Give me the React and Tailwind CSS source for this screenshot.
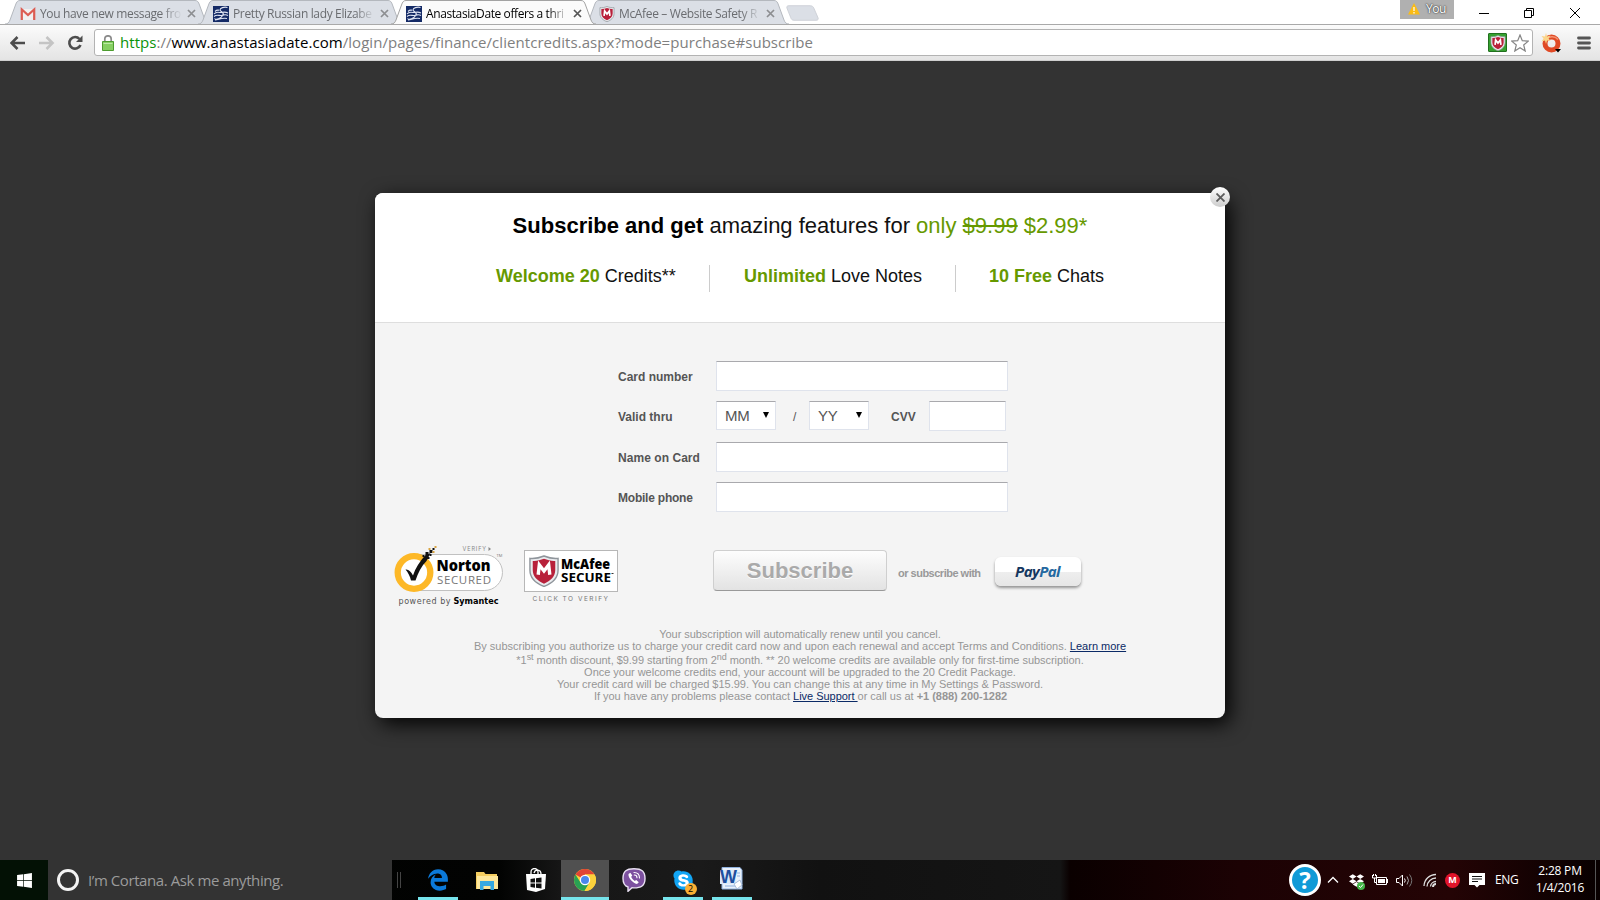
import React from 'react';
import { FaWindows, FaEdgeLegacy, FaSkype, FaDropbox } from 'react-icons/fa';

const TABS = [
  { icon: 'gmail', title: 'You have new message fro', spacing: 'tracking-[-0.35px]' },
  { icon: 'anastasia', title: 'Pretty Russian lady Elizabe', spacing: 'tracking-[-0.35px]' },
  { icon: 'anastasia', title: 'AnastasiaDate offers a thri', active: true, spacing: 'tracking-[-0.4px]' },
  { icon: 'mcafee', title: 'McAfee – Website Safety R', spacing: 'tracking-[-0.35px]' },
];

const McAfeeShield = ({ className }) => (
  <svg className={className} viewBox="0 0 32 34">
    <path d="M16 1C11 3 6 4 1 3.500V16C1 25 8 30.500 16 33.500C24 30.500 31 25 31 16V3.500C26 4 21 3 16 1Z" fill="#e9ebee" stroke="#8f959b" strokeWidth="1.500" />
    <path d="M16 4C12 5.500 8 6.500 4 6.200V16C4 23 9 27.500 16 30.500C23 27.500 28 23 28 16V6.200C24 6.500 20 5.500 16 4Z" fill="#b8203a" />
    <path d="M9.800 21L11 10.500L16 17L21 10.500L22.200 21" fill="none" stroke="#fff" strokeWidth="3.600" />
  </svg>
);

const Favicon = ({ name }) => {
  if (name === 'gmail') {
    return (
      <svg className="h-4 w-4 shrink-0" viewBox="0 0 16 16">
        <path d="M1 3H15V14H1Z" fill="#f1efef" />
        <path d="M1.800 14V3.500L8 9L14.200 3.500V14" fill="none" stroke="#dc5c52" strokeWidth="2.200" />
      </svg>
    );
  }
  if (name === 'mcafee') return <McAfeeShield className="h-4 w-4 shrink-0" />;
  return (
    <svg className="h-4 w-4 shrink-0" viewBox="0 0 16 16">
      <path d="M0 0H16V16H0Z" fill="#142a66" />
      <path d="M14.500 1.500C11 0.500 7 2 7 4C7.500 6 11.500 6 10 9C8 12.500 3 14.500 1.500 12.500M1 8C3 5.500 5 6 7 6.500S11 5 15 7M1 10.500C4 8 6 10 8.500 9.500S12 8 15 9.500M2 14C6 13.500 9 11.500 14 12.500M2 5.500C4 3.500 5 4.500 6 4" fill="none" stroke="#dfe4f2" strokeWidth="1.100" />
    </svg>
  );
};

const CloseMark = ({ color }) => (
  <svg className="h-[9px] w-[9px] shrink-0" viewBox="0 0 9 9">
    <path d="M1 1L8 8M8 1L1 8" stroke={color} strokeWidth="1.700" />
  </svg>
);

const Tab = ({ tab }) => (
  <div className={`relative -mr-[15px] h-6 w-[208px] shrink-0 ${tab.active ? 'z-10' : ''}`}>
    <svg className="absolute inset-0 h-full w-full" viewBox="0 0 208 24">
      <path
        d="M0 24C3 24 4 22.500 5 20L10.500 5C11.500 2 12.500 0.500 15 0.500H190C192.500 0.500 193.500 2 194.500 5L200 20C201 22.500 202 24 205 24"
        fill={tab.active ? '#fbfbfb' : '#dbdfe6'}
        stroke={tab.active ? '#a3a3a3' : '#b4b8be'}
      />
    </svg>
    <div className="relative flex h-full items-center pl-[15px] pt-[3px]">
      <Favicon name={tab.icon} />
      <div className={`ml-1 w-[142px] overflow-hidden whitespace-nowrap text-[12px] [mask-image:linear-gradient(to_right,black_86%,transparent)] ${tab.spacing} ${tab.active ? 'text-black' : 'text-[#6a6c70]'}`}>
        {tab.title}
      </div>
      <div className="ml-[5px] flex">
        <CloseMark color={tab.active ? '#555' : '#8c8e91'} />
      </div>
    </div>
  </div>
);

const BrowserChrome = () => (
  <header className="shrink-0 font-['Open_Sans',sans-serif]">
    <div className="flex h-6 justify-between bg-white">
      <div className="flex pl-[5px]">
        {TABS.map((tab) => (
          <Tab key={tab.title} tab={tab} />
        ))}
        <svg className="ml-[9px] mt-[5px] h-4 w-[33px]" viewBox="0 0 34 16">
          <path d="M3 0.500H25C27 0.500 28 1.500 28.700 3L33 13C33.500 14.500 33 15.500 31 15.500H8C6.500 15.500 5.500 14.500 5 13L1 3C0.500 1.500 1 0.500 3 0.500Z" fill="#dbdfe6" stroke="#cdd1d7" />
        </svg>
      </div>
      <div className="flex">
        <div className="flex h-[19px] w-[54px] items-center bg-[#b0b0b0] pb-0.5 pl-2 text-[12px] tracking-[-0.5px] text-white">
          <svg className="mr-[6px] h-3 w-3" viewBox="0 0 12 12">
            <path d="M6 0L12 11.500H0Z" fill="#fbbc14" />
            <path d="M6 4V8M6 9V10.500" stroke="#fff" strokeWidth="1.200" />
          </svg>
          <span className="[text-shadow:0_0_2px_#222,0_0_1px_#444]">You</span>
        </div>
        <svg className="ml-[25px] h-6 w-[121px]" viewBox="0 0 121 24" fill="none" stroke="#000">
          <path d="M0 13.500H10M45.500 10.500H52.500V17.500H45.500ZM47.500 10V8.500H54.500V15.500H53M91 8L101 18M101 8L91 18" />
        </svg>
      </div>
    </div>
    <div className="flex h-[37px] items-center border-b border-t border-b-[#d0d0d0] border-t-[#a9a9a9] bg-gradient-to-b from-[#fbfbfb] to-[#e4e4e4] pl-2.5">
      <svg className="h-5 w-[75px]" viewBox="0 0 75 20" fill="none" strokeWidth="2.600">
        <path d="M15 10H1.500M7.500 4L1.500 10L7.500 16" stroke="#4d4d4d" />
        <path d="M29 10H42.500M36.500 4L42.500 10L36.500 16" stroke="#c4c4c4" />
        <path d="M70.500 12A5.800 5.800 0 1 1 69.500 6" stroke="#4d4d4d" />
        <path d="M72.500 2.500V9H66Z" fill="#4d4d4d" />
      </svg>
      <div className="ml-[9px] flex h-[27px] w-[1439px] items-center rounded-[3px] border border-[#b3b3b3] bg-white pl-[7px] pr-[3px]">
        <svg className="h-4 w-3" viewBox="0 0 12 16">
          <path d="M2.800 8V4A3.200 3.200 0 0 1 9.200 4V8" fill="none" stroke="#8b8b8b" strokeWidth="1.700" />
          <path d="M0.500 6.500H11.500V15.500H0.500Z" fill="#86cf62" stroke="#4d9c2f" />
          <path d="M1.500 8.500H10.500" stroke="#bdeaa6" />
        </svg>
        <div className="ml-[6px] grow whitespace-nowrap text-[15px] tracking-[0.05px] text-[#808080]">
          <span className="text-[#0a930a]">https</span>://<span className="text-black">www.anastasiadate.com</span>
          /login/pages/finance/clientcredits.aspx?mode=purchase#subscribe
        </div>
        <div className="flex h-[19px] w-[19px] items-center justify-center rounded-[1px] border border-[#22701f] bg-[#35a12f]">
          <McAfeeShield className="h-4 w-4" />
        </div>
        <svg className="ml-1 h-[18px] w-[18px]" viewBox="0 0 18 18">
          <path d="M9 1L11.300 6.700L17.300 7.100L12.700 11L14.200 17L9 13.700L3.800 17L5.300 11L0.700 7.100L6.700 6.700Z" fill="#fff" stroke="#858585" strokeWidth="1.200" />
        </svg>
      </div>
      <svg className="ml-2 h-5 w-5" viewBox="0 0 20 20">
        <circle cx="10.500" cy="10.500" r="6.500" fill="none" stroke="#e04a26" strokeWidth="5" />
        <path d="M5 7A7.500 7.500 0 0 1 17 6.500" fill="none" stroke="#f49372" strokeWidth="1.500" />
        <path d="M5 0L6 3.500L9.500 2.500L7.500 5.500L9.500 8L6 7.500L5 11L4 7.500L0.500 8.500L2.500 5.500L0.500 3L4 3.500Z" fill="#fbd58a" />
        <path d="M14 16H20L17 19.500Z" fill="#000" />
      </svg>
      <svg className="ml-4 h-[14px] w-[14px]" viewBox="0 0 14 14">
        <path d="M1.500 2H12.500M1.500 7H12.500M1.500 12H12.500" stroke="#555" strokeWidth="2.800" strokeLinecap="round" />
      </svg>
    </div>
  </header>
);

const Field = ({ label, spacing = '', children }) => (
  <div className="flex items-start">
    <label className={`w-[98px] pt-2 text-[12px] font-bold leading-4 text-[#555] ${spacing}`}>{label}</label>
    {children}
  </div>
);

const inputClass = 'border border-[#dfe3ec] border-t-[#a9a9ad] bg-white outline-none';

const Select = ({ value }) => (
  <div className={`${inputClass} flex h-[29px] w-[60px] items-center justify-between pl-2 pr-1.5 text-[15px] text-[#555]`}>
    <span className="pt-px tracking-[-0.3px]">{value}</span>
    <svg className="mb-0.5 h-[6px] w-[6px]" viewBox="0 0 6 6">
      <path d="M0 0H6L3 6Z" fill="#000" />
    </svg>
  </div>
);

const NortonSeal = () => (
  <svg className="h-[64px] w-[111px]" viewBox="0.5 0 111 64">
    <text x="69" y="6" fontFamily="Inter" fontSize="5.500" letterSpacing="0.9" fill="#888">VERIFY</text>
    <path d="M95 2L97.500 4L95 6Z" fill="#888" />
    <path d="M20 9.500H91A17.500 17.500 0 0 1 91 45.500H20Z" fill="#fff" stroke="#c1c1c1" />
    <circle cx="20.500" cy="27.500" r="16.300" fill="#fff" stroke="#fdb827" strokeWidth="6.300" />
    <path d="M12 24.500C15 24 17.500 26.500 19.500 30.500C22 23 26 17 32 10L37 8L33 16C28 21 24.500 28 22 35.500H17.500C16.500 31 14.500 27.500 12 24.500Z" fill="#111" />
    <path d="M32 7H35V10H32ZM36 5H39V8H36ZM36 9H38V11H36ZM33 12H36V14H33ZM39 3H41V5H39ZM29 10H31V12H29Z" fill="#111" />
    <path d="M35 3H37V5H35ZM41 1H43V3H41ZM39 6H41V8H39Z" fill="#d9a441" />
    <text x="43" y="26" fontFamily="Open Sans" fontWeight="800" fontSize="15.500" textLength="54" lengthAdjust="spacingAndGlyphs" fill="#000">Norton</text>
    <text x="43.500" y="38.500" fontFamily="Open Sans" fontSize="11.500" textLength="54" fill="#777">SECURED</text>
    <text x="103" y="12" fontFamily="Open Sans" fontSize="4" fill="#777">TM</text>
    <text x="5" y="59" fontFamily="DejaVu Sans" fontSize="8" textLength="52" fill="#555">powered by</text>
    <text x="60" y="59" fontFamily="DejaVu Sans" fontWeight="700" fontSize="8" textLength="45" lengthAdjust="spacingAndGlyphs" fill="#000">Symantec</text>
  </svg>
);

const McAfeeSeal = () => (
  <div className="flex w-[94px] flex-col">
    <div className="flex h-[42px] items-center border border-[#b7b7b7] bg-white pl-1">
      <McAfeeShield className="h-8 w-[30px]" />
      <svg className="ml-0.5 h-10 w-[54px]" viewBox="0 0 54 40">
        <text x="0" y="18" fontFamily="Open Sans" fontWeight="800" fontSize="13.500" textLength="49" lengthAdjust="spacingAndGlyphs">McAfee</text>
        <text x="0" y="31" fontFamily="Open Sans" fontWeight="700" fontSize="12.500" textLength="50" lengthAdjust="spacingAndGlyphs">SECURE</text>
        <path d="M50.500 22.500H52.500" stroke="#333" />
      </svg>
    </div>
    <div className="mt-[3px] whitespace-nowrap text-center font-['Inter',sans-serif] text-[6.500px] leading-[8px] tracking-[1.500px] text-[#777]">
      CLICK TO VERIFY
    </div>
  </div>
);

const Modal = () => (
  <section className="relative mt-[132px] h-[525px] w-[850px] rounded-[8px] bg-[#f4f4f4] font-['Liberation_Sans',sans-serif] shadow-[5px_6px_20px_0_rgba(0,0,0,0.95)]">
    <button className="absolute -right-[5px] -top-[6px] flex h-5 w-5 items-center justify-center rounded-full bg-gradient-to-b from-white to-[#ccc]">
      <svg className="h-[9px] w-[9px]" viewBox="0 0 9 9">
        <path d="M0.500 0.500L8.500 8.500M8.500 0.500L0.500 8.500" stroke="#5c5c5c" strokeWidth="1.800" />
      </svg>
    </button>

    <div className="h-[130px] rounded-t-[8px] border-b border-[#dedede] bg-white pt-[18px] text-[#111]">
      <h1 className="whitespace-nowrap text-center text-[22px] leading-[30px]">
        <b className="text-black">Subscribe and get</b> amazing features for <span className="text-[#690]">only <s>$9.99</s> $2.99*</span>
      </h1>
      <div className="ml-[121px] mt-6 flex text-[18px] leading-[22px]">
        <div className="w-[213px]"><b className="text-[#690]">Welcome 20</b> Credits**</div>
        <div className="h-[27px] w-[247px] border-x border-[#ccc] pl-[34px]"><b className="text-[#690]">Unlimited</b> Love Notes</div>
        <div className="pl-[33px]"><b className="text-[#690]">10 Free</b> Chats</div>
      </div>
    </div>

    <div className="ml-[243px] mt-[38px] flex flex-col">
      <Field label="Card number">
        <input className={`${inputClass} h-[30px] w-[292px]`} />
      </Field>
      <div className="h-2.5" />
      <Field label="Valid thru">
        <Select value="MM" />
        <span className="w-[33px] pl-[17px] pt-2 text-[12px] leading-4 text-[#555]">/</span>
        <Select value="YY" />
        <span className="w-[60px] pl-[22px] pt-2 text-[12px] font-bold leading-4 text-[#555]">CVV</span>
        <input className={`${inputClass} h-[30px] w-[77px]`} />
      </Field>
      <div className="h-[11px]" />
      <Field label="Name on Card" spacing="tracking-[0.05px]">
        <input className={`${inputClass} h-[30px] w-[292px]`} />
      </Field>
      <div className="h-2.5" />
      <Field label="Mobile phone" spacing="tracking-[-0.22px]">
        <input className={`${inputClass} h-[30px] w-[292px]`} />
      </Field>
    </div>

    <div className="mt-[33px] flex h-[70px] items-start pl-[19px]">
      <NortonSeal />
      <div className="ml-[19px] pt-[5px]">
        <McAfeeSeal />
      </div>
      <button className="ml-[95px] mt-[5px] h-[41px] w-[174px] rounded-[4px] border border-[#cfcfcf] border-b-[#999] bg-gradient-to-b from-[#fdfdfd] to-[#e3e3e3] text-[22px] font-bold text-[#aaa] [text-shadow:0_1px_0_#fff]">
        Subscribe
      </button>
      <span className="ml-[11px] mt-5 w-[97px] whitespace-nowrap text-[11px] font-bold leading-4 tracking-[-0.5px] text-[#999]">or subscribe with</span>
      <button className="mt-[12px] flex h-[29px] w-[86px] items-center justify-center rounded-[6px] bg-[linear-gradient(#fff_50%,#eee_50%,#e6e6e6)] pb-px pr-px font-['Open_Sans',sans-serif] text-[15px] font-bold italic tracking-[-0.6px] shadow-[0_2px_3px_0_rgba(0,0,0,0.4)]">
        <span className="text-[#15375f]">Pay</span>
        <span className="text-[#2468a0]">Pal</span>
      </button>
    </div>

    <div className="mt-[13px] whitespace-nowrap text-center text-[11px] leading-[12px] text-[#969696]">
      <p className="tracking-[-0.05px]">Your subscription will automatically renew until you cancel.</p>
      <p>By subscribing you authorize us to charge your credit card now and upon each renewal and accept Terms and Conditions. <a className="text-[#0b2a66] underline">Learn more</a></p>
      <p className="pt-0.5 tracking-[-0.04px]">*1<sup className="text-[9px]">st</sup> month discount, $9.99 starting from 2<sup className="text-[9px]">nd</sup> month. ** 20 welcome credits are available only for first-time subscription.</p>
      <p className="tracking-[-0.02px]">Once your welcome credits end, your account will be upgraded to the 20 Credit Package.</p>
      <p className="tracking-[-0.02px]">Your credit card will be charged $15.99. You can change this at any time in My Settings &amp; Password.</p>
      <p className="pl-px tracking-[-0.02px]">If you have any problems please contact <a className="text-[#0b2a66] underline">Live Support </a>or call us at <b>+1 (888) 200-1282</b></p>
    </div>
  </section>
);

const ChromeIcon = () => (
  <svg className="h-[22px] w-[22px]" viewBox="0 0 22 22">
    <circle cx="11" cy="11" r="11" fill="#fdd23c" />
    <path d="M11 11L1.500 5.500A11 11 0 0 1 20.500 5.500H11Z" fill="#e14434" />
    <path d="M1.500 5.500A11 11 0 0 0 10.500 22L15.500 13.500L11 11L6.500 13.500Z" fill="#29a153" />
    <path d="M11 11L15.800 13.500L10.500 22A11 11 0 0 0 20.500 5.500H11Z" fill="#fdd23c" />
    <circle cx="11" cy="11" r="5.200" fill="#fff" />
    <circle cx="11" cy="11" r="4" fill="#4a86ec" />
  </svg>
);

const ExplorerIcon = () => (
  <svg className="h-[19px] w-[22px]" viewBox="0 0 22 19">
    <path d="M0 1H8L9.500 3H21V18H0Z" fill="#f4cd60" />
    <path d="M1 5H22V18H1Z" fill="#fde79b" />
    <path d="M4 19V10H18V19H14.500V15H7.500V19Z" fill="#36a9e1" />
  </svg>
);

const StoreIcon = () => (
  <svg className="h-6 w-[22px]" viewBox="0 0 22 24">
    <path d="M6 7V4A3.500 3.500 0 0 1 13 4V7M9 5C10 1 16 1 16 6" fill="none" stroke="#fff" strokeWidth="1.300" />
    <path d="M1 6H21L20 21L11 24L2 22Z" fill="#fff" />
    <path d="M5.500 11L10 10.300V14.500H5.500ZM11 10.200L16.500 9.500V14.500H11ZM5.500 15.500H10V19.700L5.500 19ZM11 15.500H16.500V20.500L11 19.800Z" fill="#111" />
  </svg>
);

const ViberIcon = () => (
  <svg className="h-6 w-6" viewBox="0 0 24 24">
    <path d="M12 0.700C4 0.700 1 3.500 1 10.500C1 15 2.500 17.800 6 19V23.300L10 19.800C19.500 20.300 23 17.500 23 10.500C23 3.500 20 0.700 12 0.700Z" fill="#7d51a0" stroke="#e9e0f2" strokeWidth="1.400" />
    <path d="M8.300 4.800L6.500 6C6 9.500 10.500 15 15 16L16.800 14.200L14.200 12L12.800 13C11 12 9.800 10.500 9.200 8.800L10.300 7.600Z" fill="#fff" />
    <path d="M12 4.500C15.500 4.500 17.500 6.800 17.500 10M12.300 7C14 7 15 8 15 9.800" fill="none" stroke="#fff" strokeWidth="1.100" strokeLinecap="round" />
  </svg>
);

const WordIcon = () => (
  <svg className="mb-[3px] mr-px h-[23px] w-[23px]" viewBox="0 0 23 23">
    <path d="M2 0.500H20L22 3V22H2Z" fill="#e9f1fb" stroke="#8fb1de" />
    <path d="M17 6H20M17 9H20M5 19H19" stroke="#8fb1de" />
    <path d="M0 3H16V17H0Z" fill="#dce9f8" />
    <text x="0" y="16" fontFamily="Liberation Sans" fontWeight="700" fontSize="18" fill="#1e4f9e">W</text>
    <path d="M14 17L20 13L22 18L17 22Z" fill="#fff" stroke="#a9bddb" />
  </svg>
);

const SkypeIcon = () => (
  <div className="relative">
    <svg className="h-[23px] w-[23px]" viewBox="0 0 23 23">
      <circle cx="11.500" cy="11.500" r="7" fill="#fff" />
      <FaSkype size={23} color="#12a5f4" />
    </svg>
    <div className="absolute -bottom-[3px] -right-[2px] flex h-3 w-3 items-center justify-center rounded-full bg-[#fbb034] text-[9px] text-black">2</div>
  </div>
);

const TASKS = [
  { name: 'edge', icon: <FaEdgeLegacy className="h-[22px] w-[22px] text-[#0b79d9]" />, open: true },
  { name: 'explorer', icon: <ExplorerIcon /> },
  { name: 'store', icon: <StoreIcon /> },
  { name: 'chrome', icon: <ChromeIcon />, open: true, focused: true },
  { name: 'viber', icon: <ViberIcon /> },
  { name: 'skype', icon: <SkypeIcon />, open: true },
  { name: 'word', icon: <WordIcon />, open: true },
];

const Taskbar = () => (
  <footer className="flex h-10 shrink-0 bg-[linear-gradient(to_right,#000_0,#020302_500px,#161616_560px,#1a1a1a_700px,#111_820px,#151515_1060px,#0a0000_1070px,#1c0204_1240px,#240405_1450px,#080000_1600px)] font-['Open_Sans',sans-serif]">
    <div className="flex w-12 items-center justify-center bg-[#031105]">
      <FaWindows className="h-[17px] w-[17px] text-white" />
    </div>
    <div className="flex w-[344px] items-center bg-[#333] pl-[9px] text-[15px] text-[#9b9b9b]">
      <div className="mr-[9px] h-[22px] w-[22px] rounded-full border-[3px] border-[#f3f3f3]" />
      <span className="whitespace-nowrap tracking-[-0.42px]">I’m Cortana. Ask me anything.</span>
    </div>
    <div className="ml-[5px] mt-3 h-4 w-[4px] border-x border-[#444]" />
    <div className="ml-[13px] flex gap-px">
      {TASKS.map((task) => (
        <div key={task.name} className={`flex w-12 flex-col items-center ${task.focused ? 'bg-[#505050]' : ''}`}>
          <div className="flex h-[37px] items-center pt-[3px]">{task.icon}</div>
          {task.open && <div className={`h-[3px] bg-[#76e4ec] ${task.focused ? 'w-12' : 'w-10'}`} />}
        </div>
      ))}
    </div>

    <div className="ml-auto flex items-center text-white">
      <div className="flex h-8 w-8 items-center justify-center rounded-full border-[3px] border-white bg-[#109ad7] text-[24px] font-bold">?</div>
      <svg className="ml-[6px] h-3 w-3" viewBox="0 0 12 12" fill="none" stroke="#fff" strokeWidth="1.300">
        <path d="M1 8.500L6 3.500L11 8.500" />
      </svg>
      <div className="relative ml-[10px]">
        <FaDropbox className="h-[15px] w-[15px]" />
        <svg className="absolute -bottom-[2px] -right-[1px] h-2 w-2" viewBox="0 0 8 8">
          <circle cx="4" cy="4" r="4" fill="#43b649" />
          <path d="M2 4L3.500 5.500L6 2.500" fill="none" stroke="#fff" />
        </svg>
      </div>
      <svg className="ml-2 h-3 w-4" viewBox="0 0 16 12">
        <path d="M4.500 3.500H14.500V10.500H4.500ZM15.500 5V9" fill="none" stroke="#fff" />
        <path d="M6 5H13V9H6Z" fill="#fff" />
        <path d="M0.500 1V4H4.500V1M1.500 0V2M3.500 0V2M2.500 4V8.500H5" fill="none" stroke="#fff" />
      </svg>
      <svg className="ml-2 h-[15px] w-[17px]" viewBox="0 0 17 15" fill="none" stroke="#fff">
        <path d="M0.500 5.500H3L6.500 2V13L3 9.500H0.500Z" />
        <path d="M8.500 5.500Q10 7.500 8.500 9.500" />
        <path d="M11 3.500Q14 7.500 11 11.500" stroke="#aaa" />
        <path d="M13.500 1.500Q18 7.500 13.500 13.500" stroke="#777" />
      </svg>
      <svg className="ml-[10px] h-[14px] w-[14px]" viewBox="0 0 14 14" fill="none" stroke="#ddd" strokeWidth="1.300">
        <path d="M1 13A12 12 0 0 1 13 1.500M4 13.500A9 9 0 0 1 13 5M7.500 13.500A5.500 5.500 0 0 1 13 8.500" />
        <path d="M10 14A3 3 0 0 1 13 11" strokeWidth="2" />
      </svg>
      <div className="ml-[8px] flex h-[15px] w-[15px] items-center justify-center rounded-full bg-[#e0142a] text-[9px] font-bold">M</div>
      <svg className="ml-[9px] h-4 w-4" viewBox="0 0 16 16">
        <path d="M0 1H16V13H10.500L8 15.500L5.500 13H0Z" fill="#fff" />
        <path d="M3 4.500H13M3 7H13M3 9.500H9" stroke="#111" />
      </svg>
      <span className="ml-[10px] w-[23px] text-[12px] tracking-[-0.3px]">ENG</span>
      <div className="ml-[15px] w-[54px] whitespace-nowrap pb-0.5 text-center text-[12px] leading-[17px] tracking-[-0.2px]">
        <div>2:28 PM</div>
        <div>1/4/2016</div>
      </div>
      <div className="ml-2 mr-1 h-10 w-px bg-[#555]" />
    </div>
  </footer>
);

const App = () => (
  <div className="flex h-[900px] w-[1600px] flex-col overflow-hidden bg-[#333]">
    <BrowserChrome />
    <main className="flex grow items-start justify-center">
      <Modal />
    </main>
    <Taskbar />
  </div>
);

export default App;
